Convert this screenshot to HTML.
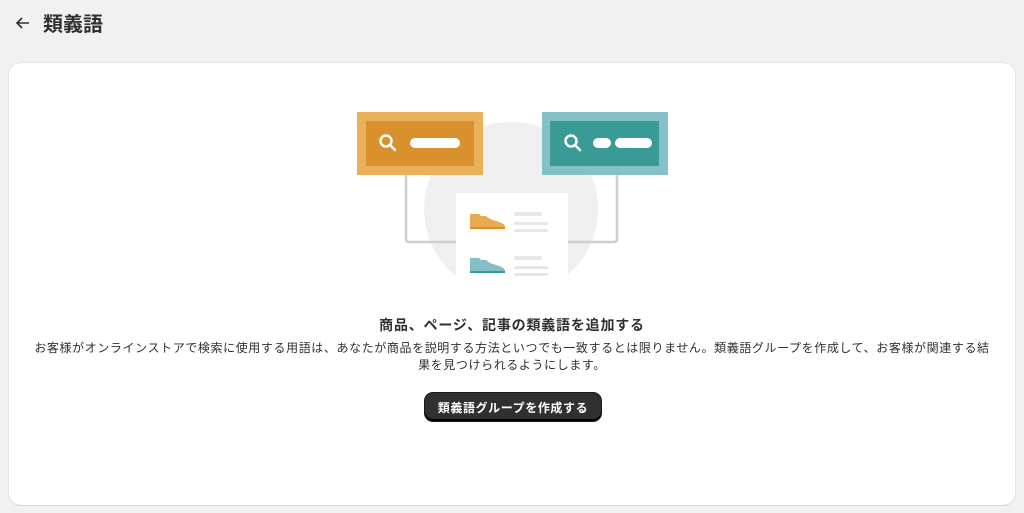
<!DOCTYPE html>
<html><head><meta charset="utf-8"><style>
body{margin:0;background:#f1f1f1;width:1024px;height:513px;overflow:hidden;font-family:"Liberation Sans","Noto Sans CJK JP",sans-serif;color:#303030}
.hdr{position:absolute;left:14px;top:8px;font-size:20px;font-weight:700;display:flex;align-items:center}
.card{position:absolute;left:9px;top:63px;width:1006px;height:442px;background:#fff;border-radius:12px;box-shadow:0 1px 0 #d4d4d4,0 0 0 1px #e3e3e3}
.t{position:absolute;left:0;width:1024px;text-align:center}
</style></head><body>
<div class="hdr"><svg width="18" height="18" viewBox="0 0 18 18"><path d="M15 9H3M8 4L3 9l5 5" stroke="#303030" stroke-width="1.6" fill="none"/></svg><span style="margin-left:11px">類義語</span></div>
<div class="card"></div>
<svg style="position:absolute;left:0;top:0" width="1024" height="290">
<defs><clipPath id="c"><rect x="0" y="0" width="1024" height="277"/></clipPath></defs>
<g clip-path="url(#c)">
<circle cx="511" cy="209" r="87" fill="#efeff0"/>
<path d="M406 174V239q0 3 3 3H456M617 174V239q0 3-3 3H568" stroke="#cfcfcf" stroke-width="2.5" fill="none"/>
<rect x="456" y="193" width="112" height="100" fill="#fff"/>
<path d="M470 214h9l2 2h5l4 3 9 3q6 2 6 5v1h-35z" fill="#e8a94f"/><rect x="470" y="227" width="35" height="2" fill="#d68f2b"/>
<path d="M470 258h9l2 2h5l4 3 9 3q6 2 6 5v1h-35z" fill="#82bfc6"/><rect x="470" y="271" width="35" height="2" fill="#3a9a95"/>
<rect x="514" y="212" width="28" height="4" rx="2" fill="#e6e6e8"/><rect x="514" y="222" width="34" height="3" rx="1.5" fill="#e6e6e8"/><rect x="514" y="229" width="34" height="3" rx="1.5" fill="#e6e6e8"/>
<rect x="514" y="256" width="28" height="4" rx="2" fill="#e6e6e8"/><rect x="514" y="266" width="34" height="3" rx="1.5" fill="#e6e6e8"/><rect x="514" y="273" width="34" height="3" rx="1.5" fill="#e6e6e8"/>
</g>
<rect x="357" y="112" width="126" height="63" fill="#ebb05a"/><rect x="366" y="121" width="108" height="45" fill="#d8912c"/>
<circle cx="386" cy="141" r="5.5" stroke="#fff" stroke-width="2.5" fill="none"/><path d="M390 145l5 5" stroke="#fff" stroke-width="2.5" stroke-linecap="round"/>
<rect x="410" y="138" width="50" height="10" rx="5" fill="#fff"/>
<rect x="542" y="112" width="126" height="63" fill="#84c0c8"/><rect x="550" y="121" width="109" height="45" fill="#3a9b96"/>
<circle cx="571" cy="141" r="5.5" stroke="#fff" stroke-width="2.5" fill="none"/><path d="M575 145l5 5" stroke="#fff" stroke-width="2.5" stroke-linecap="round"/>
<rect x="593" y="138" width="18" height="10" rx="5" fill="#fff"/><rect x="615" y="138" width="37" height="10" rx="5" fill="#fff"/>
</svg>
<div class="t" style="top:315px;font-size:14px;font-weight:700;letter-spacing:0.8px">商品、ページ、記事の類義語を追加する</div>
<div class="t" style="top:340px;font-size:12px;line-height:17px;left:20px;width:984px;letter-spacing:0.6px">お客様がオンラインストアで検索に使用する用語は、あなたが商品を説明する方法といつでも一致するとは限りません。類義語グループを作成して、お客様が関連する結<br>果を見つけられるようにします。</div>
<div style="position:absolute;left:425px;top:393px;width:176px;height:28px;border-radius:8px;background:#303030;box-shadow:inset 0 -2px 0 #000,0 0 0 1px #1a1a1a;color:#fff;font-size:12px;font-weight:700;letter-spacing:0.6px;display:flex;align-items:center;justify-content:center">類義語グループを作成する</div>
</body></html>
